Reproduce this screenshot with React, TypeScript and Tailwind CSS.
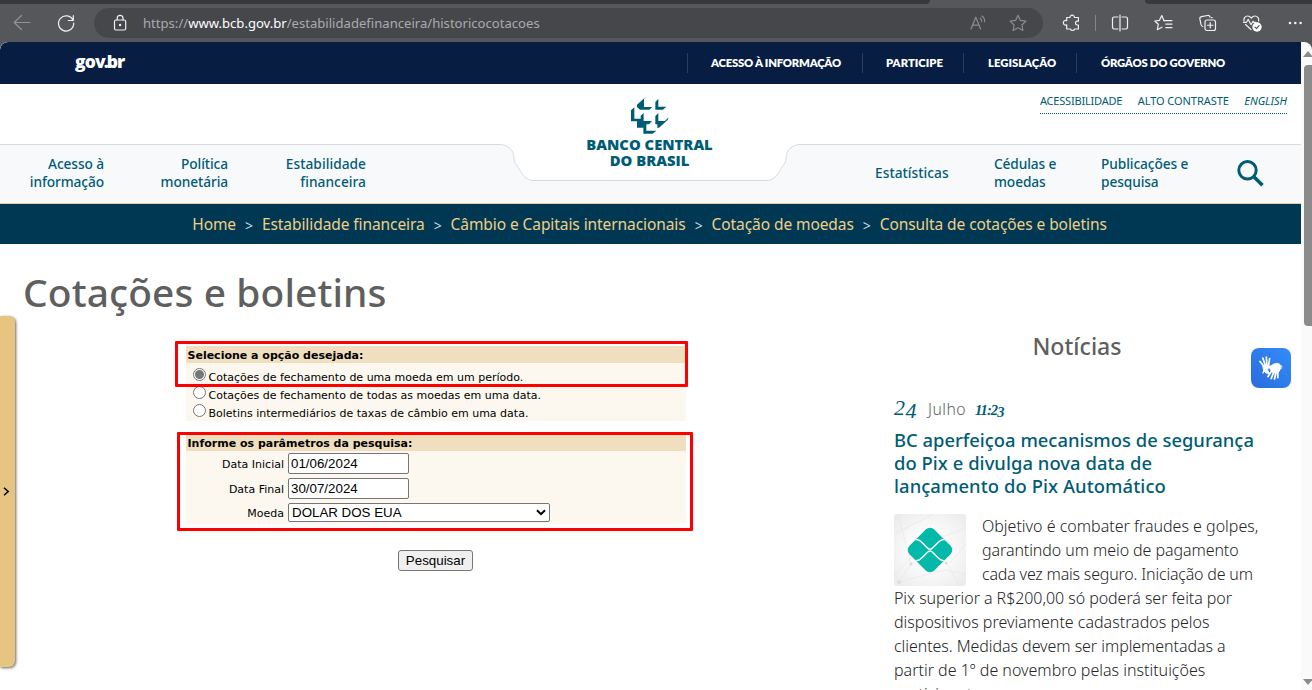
import type { ReactNode } from "react";

const noto = "font-['Noto_Sans','Open_Sans',sans-serif]";

function ToolIcon({ children, className }: { children: ReactNode; className?: string }) {
  return (
    <svg
      viewBox="0 0 20 20"
      width="20"
      height="20"
      fill="none"
      stroke="currentColor"
      strokeWidth="1.2"
      strokeLinecap="round"
      strokeLinejoin="round"
      className={`shrink-0 ${className ?? ""}`}
    >
      {children}
    </svg>
  );
}

function BrowserBar() {
  return (
    <div className="flex h-[42px] w-full shrink-0 flex-col bg-[#56575b]">
      <div className="flex h-1 justify-between">
        <div className="w-[930px] rounded-br-lg bg-[#38393d]" />
        <div className="w-[167px] rounded-bl-lg bg-[#38393d]" />
      </div>
      <div className="flex h-[38px] items-center">
        <ToolIcon className="ml-3 text-[#929396]">
          <path d="M18 9.5H2.5M9.5 2.5L2.2 9.5l7.3 7" />
        </ToolIcon>
        <ToolIcon className="ml-6 text-[#f0f0f0]">
          <path d="M17 7.2A7.6 7.6 0 1 0 17.7 10M17.3 2.5v5h-5" />
        </ToolIcon>
        <div className="ml-[18px] flex h-[30px] w-[949px] items-center rounded-full bg-[#46474b]">
          <ToolIcon className="ml-4 text-[#f0f0f0]">
            <rect x="4.5" y="7" width="11.2" height="10" rx="1.5" />
            <path d="M7.2 7V5.2a2.9 2.9 0 0 1 5.8 0V7" />
            <circle cx="10.1" cy="12" r="0.6" fill="currentColor" />
          </ToolIcon>
          <div className={`ml-[13px] pt-px text-[13.1px] whitespace-nowrap text-[#aaabad] ${noto}`}>
            https://<span className="text-white">www.bcb.gov.br</span>/estabilidadefinanceira/historicocotacoes
          </div>
          <ToolIcon className="ml-auto text-[#8b8c8f]">
            <path d="M3 16L7.8 4.2 12.6 16M4.6 12.2h6.4M12.2 5.2c1.2.9 1.6 2 1.5 3.4M14 3c2 1.4 2.8 3.2 2.6 5.6" />
          </ToolIcon>
          <ToolIcon className="mr-[15px] ml-[20px] text-[#8b8c8f]">
            <path d="M10 2.3l2.4 5.1 5.5.7-4 3.9 1 5.5-4.9-2.7-4.9 2.7 1-5.5-4-3.9 5.5-.7z" />
          </ToolIcon>
        </div>
        <div className="flex flex-1 items-center text-[#f0f0f0]">
          <ToolIcon className="ml-[18px]">
            <path
              transform="translate(1.2 0)"
              d="M4.5 4.5h3.2a2.3 2.3 0 1 1 4.6 0h3.900v3.700h-1a1.900 1.900 0 1 0 0 3.800h1v4h-3.700a2.300 2.300 0 0 1-4.300 0H4.500v-4.200a2.300 2.300 0 1 1 0-4.100z"
            />
          </ToolIcon>
          <div className="ml-[14px] h-4 w-px bg-[#85868a]" />
          <ToolIcon className="ml-[14px]">
            <path d="M8 4H4.200A1.700 1.700 0 0 0 2.500 5.700v8.600A1.700 1.700 0 0 0 4.200 16H8M12 4h3.800a1.700 1.700 0 0 1 1.700 1.700v8.600a1.700 1.700 0 0 1-1.700 1.700H12M10 2v16" />
          </ToolIcon>
          <ToolIcon className="ml-[24px]">
            <path d="M10 7.800L7.800 2.500 5.500 7.300.8 8l3.500 3.300-1 5.400 4.600-2.500" />
            <path d="M10 7.600h8M11.800 11.100h6.200M11.800 14.600h6.200" />
          </ToolIcon>
          <ToolIcon className="ml-[24px]">
            <rect x="7" y="7" width="10.500" height="10.500" rx="2" />
            <path d="M12.250 9.500v5.500M9.500 12.250h5.500M4.800 13.500c-1.200-.3-1.600-1-1.800-2L1.900 6.200C1.700 5 2.200 4 3.400 3.700l6.200-1.200c1.300-.2 2.100.4 2.500 1.700M13.500 4.700h.6" />
          </ToolIcon>
          <ToolIcon className="ml-[24px]">
            <path d="M9 16.500L3.500 11.500M2 8C1.300 5.500 3 3 5.700 3c1.600 0 2.600.8 3.600 2 1-1.200 2-2 3.600-2 2.700 0 4.400 2.500 3.700 5M1.500 9.300h3l1.700-3 2.800 5.400 2-3.500.8 1.100h2" />
            <circle cx="15" cy="14" r="4.700" fill="#fff" stroke="none" />
            <path d="M13 14.100l1.500 1.500 2.600-2.900" stroke="#56575b" />
          </ToolIcon>
          <ToolIcon className="ml-[24px]">
            <g fill="currentColor" stroke="none">
              <circle cx="4" cy="10" r="1.300" />
              <circle cx="9.300" cy="10" r="1.300" />
              <circle cx="14.600" cy="10" r="1.300" />
            </g>
          </ToolIcon>
        </div>
      </div>
    </div>
  );
}

function GovBar() {
  return (
    <div className="flex h-[42px] shrink-0 items-center rounded-tl-lg bg-[#071d41] text-white">
      <div className="w-[687px] pb-[3px] pl-[75px] font-['Open_Sans','Noto_Sans',sans-serif] text-[17.5px] leading-none font-extrabold">
        <span className="tracking-[-0.9px]">go</span>
        <span className="tracking-[-2px]">v.</span>
        <span className="tracking-[-0.9px]">br</span>
      </div>
      <div className="flex h-5 items-center font-['Lato',sans-serif] text-[11.3px] font-extrabold tracking-[-0.22px] whitespace-nowrap">
        <div className="flex h-5 w-[175px] items-center border-l border-[#2c3e5d] pt-px pl-[23px]">ACESSO À INFORMAÇÃO</div>
        <div className="flex h-5 w-[101px] items-center border-l border-[#2c3e5d] pt-px pl-[23px] tracking-normal">PARTICIPE</div>
        <div className="flex h-5 w-[113px] items-center border-l border-[#2c3e5d] pt-px pl-6 tracking-normal">LEGISLAÇÃO</div>
        <div className="flex h-5 items-center border-l border-[#2c3e5d] pt-px pl-6">ÓRGÃOS DO GOVERNO</div>
      </div>
    </div>
  );
}

function Logo() {
  return (
    <div className="absolute top-3 left-0 flex w-[1299px] flex-col items-center text-[#005c75]">
      <svg viewBox="423 37 114 114" width="38" height="38" fill="currentColor">
        <path d="M470 37L441 63v7l9 8h28l9-8h-25V46z" />
        <path d="M496 55l9-10v24h24l-10 9h-23z" />
        <path d="M423 80l10-9v34h19v-9l9-8v24h25l-9 10h-8v19h30l-11 9h-28v-18h-19v-19h-18z" />
        <path d="M496 97l9-9v24h20l11-11-3 8-26 23h-5v-10h-6z" />
      </svg>
      <div className="mt-0.5 text-center font-['Open_Sans','Noto_Sans',sans-serif] text-[14.8px] leading-4 font-extrabold">
        <div>BANCO CENTRAL</div>
        <div>DO BRASIL</div>
      </div>
    </div>
  );
}

function Header() {
  return (
    <header className="relative shrink-0 bg-white">
      <div className={`flex h-[60px] justify-end pr-[14px] text-[11px] text-[#005c75] ${noto}`}>
        <div className="mt-2 flex h-[22px] w-[247px] items-center justify-between border-b border-dotted border-[#005c75] pb-[2px] whitespace-nowrap">
          <span className="tracking-[-0.2px]">ACESSIBILIDADE</span>
          <span className="tracking-[-0.05px]">ALTO CONTRASTE</span>
          <span className="italic">ENGLISH</span>
        </div>
      </div>
      <nav
        className={`flex h-[60px] items-center border-t border-b border-t-[#d9dadb] border-b-[#e4cf9d] bg-[#f8f9fb] pb-[3px] text-[13.7px] leading-[18px] font-medium text-[#005c75] ${noto}`}
      >
        <a className="w-[104px] text-right tracking-[-0.08px]">Acesso à<br />informação</a>
        <a className="w-[124px] text-right tracking-[-0.08px]">Política<br />monetária</a>
        <a className="w-[138px] text-right tracking-[0.05px]">Estabilidade<br />financeira</a>
        <svg className="-mt-[20px] ml-[134px] h-[38px] w-[300px] shrink-0" viewBox="0 0 300 38" width="300" height="38">
          <path
            d="M0 0H300V1.500C292 1.500 286 6 286 14C286 19 283.500 21 281 24.500C277 33 272 36.500 267 36.500H33C28 36.500 23 33 19 24.500C16.500 21 14 19 14 14C14 6 8 1.500 0 1.500Z"
            fill="#fff"
          />
          <path
            d="M300 0.500C292 1 286 6 286 14C286 19 283.500 21 281 24.500C277 33 272 36.500 267 36.500H33C28 36.500 23 33 19 24.500C16.500 21 14 19 14 14C14 6 8 1 0 0.500"
            fill="none"
            stroke="#d9dadb"
          />
        </svg>
        <a className="ml-[75px] w-[119px] tracking-[0.05px]">Estatísticas</a>
        <a className="w-[107px] tracking-[-0.1px]">Cédulas e<br />moedas</a>
        <a className="w-[135px] tracking-[-0.08px]">Publicações e<br />pesquisa</a>
        <svg className="shrink-0" width="28" height="28" viewBox="0 0 28 28" fill="none" stroke="currentColor" strokeWidth="3">
          <circle cx="11.500" cy="11.300" r="8.700" />
          <path d="M17.600 17.400l8.900 8.900" strokeWidth="3.600" />
        </svg>
      </nav>
      <Logo />
    </header>
  );
}

const crumbs = [
  "Home",
  "Estabilidade financeira",
  "Câmbio e Capitais internacionais",
  "Cotação de moedas",
  "Consulta de cotações e boletins",
];

function Breadcrumb() {
  return (
    <div
      className={`flex h-10 shrink-0 items-center justify-center gap-[9px] bg-[#003853] pt-[2px] pr-[2px] text-[15.5px] tracking-[-0.08px] whitespace-nowrap text-[#f0cf85] ${noto}`}
    >
      {crumbs.map((c, i) => (
        <span key={c} className="flex items-center gap-[9px]">
          {i > 0 && <span className="text-[14px] text-[#c9dbe3]">&gt;</span>}
          <span>{c}</span>
        </span>
      ))}
    </div>
  );
}

function Radio({ checked }: { checked?: boolean }) {
  return (
    <span className="-mt-[5px] flex size-[13px] items-center justify-center rounded-full border border-[#767676] bg-white">
      {checked && <span className="size-[9px] rounded-full bg-[#767676]" />}
    </span>
  );
}

function Option({ label, checked }: { label: string; checked?: boolean }) {
  return (
    <label className="flex h-[18px] items-center gap-[2.5px] pl-[7px] whitespace-nowrap">
      <Radio checked={checked} />
      <span className="pt-[2px]">{label}</span>
    </label>
  );
}

function Field({ label, children }: { label: string; children: ReactNode }) {
  return (
    <div className="flex items-center">
      <span className="-mb-[3px] w-[98px] text-right">{label}</span>
      {children}
    </div>
  );
}

const box =
  "ml-1 flex items-center rounded-[2px] border border-[#767676] bg-white font-['Liberation_Sans',Arial,sans-serif] text-[13.333px]";

function QueryForm() {
  return (
    <div className="relative ml-[186px] w-[500px] shrink-0 pt-[6px] font-['DejaVu_Sans',Verdana,sans-serif] text-[11px] text-black">
      <div className="flex h-[17px] items-center bg-[#efdfbf] pt-[3px] pl-[1.5px] font-bold">Selecione a opção desejada:</div>
      <div className="h-[58px] bg-[#fcf8ef] pt-[5px]">
        <Option label="Cotações de fechamento de uma moeda em um período." checked />
        <Option label="Cotações de fechamento de todas as moedas em uma data." />
        <Option label="Boletins intermediários de taxas de câmbio em uma data." />
      </div>
      <div className="mt-[14px] flex h-4 items-center bg-[#efdfbf] pt-[2px] pl-[1.5px] font-bold">
        Informe os parâmetros da pesquisa:
      </div>
      <div className="flex h-[73px] flex-col gap-1 bg-[#fcf8ef] pt-[2px]">
        <Field label="Data Inicial">
          <div className={`h-[21px] w-[121px] px-[2px] ${box}`}>01/06/2024</div>
        </Field>
        <Field label="Data Final">
          <div className={`h-[21px] w-[121px] px-[2px] ${box}`}>30/07/2024</div>
        </Field>
        <Field label="Moeda">
          <div className={`h-[19px] w-[262px] justify-between px-[3px] ${box}`}>
            <span>DOLAR DOS EUA</span>
            <svg width="10" height="7" viewBox="0 0 10 7" fill="none" stroke="#000" strokeWidth="2">
              <path d="M1 1.200l4 4 4-4" />
            </svg>
          </div>
        </Field>
      </div>
      <div className="mt-[26px] ml-[212px] flex h-[21px] w-[75px] items-center justify-center rounded-[3px] border border-[#767676] bg-[#efefef] font-['Liberation_Sans',Arial,sans-serif] text-[13.333px]">
        Pesquisar
      </div>
      <div className="absolute top-[1px] -left-[11px] h-[46px] w-[513px] rounded-[1px] border-[3px] border-[#fd0000]" />
      <div className="absolute top-[92px] -left-[9px] h-[99px] w-[516px] rounded-[1px] border-[3px] border-[#fd0000]" />
    </div>
  );
}

function PixImage() {
  return (
    <svg width="72" height="72" viewBox="0 0 72 72" className="float-left mr-4 rounded-[3px]">
      <defs>
        <radialGradient id="paper" r="0.75">
          <stop offset="0.4" stopColor="#fafafa" />
          <stop offset="1" stopColor="#e8e8e8" />
        </radialGradient>
        <clipPath id="mark">
          <rect x="-17.5" y="-17.5" width="35" height="35" rx="6" transform="translate(36 36) rotate(45)" />
        </clipPath>
      </defs>
      <rect width="72" height="72" fill="url(#paper)" />
      <path
        d="M0 62L30 30 72 14M17 50L4 0M17 50L5 68 50 56 72 60M52 48l14 24M0 20l40-20M55 50L72 30"
        stroke="#e6e6e6"
        strokeWidth="0.6"
        fill="none"
      />
      <circle cx="17" cy="50" r="1.7" fill="#dedede" />
      <circle cx="5" cy="68" r="2" fill="#dedede" />
      <circle cx="52" cy="49" r="1.5" fill="#dedede" />
      <g clipPath="url(#mark)">
        <rect width="72" height="72" fill="#04b8aa" />
        <path
          d="M10 25.500H22.500C25 25.500 26 26.500 28 28.500L33.500 34C35 35.500 37 35.500 38.500 34L44 28.500C46 26.500 47 25.500 49.500 25.500H62M10 46.800H22.500C25 46.800 26 45.800 28 43.800L33.500 38.300C35 36.800 37 36.800 38.500 38.300L44 43.800C46 45.800 47 46.800 49.500 46.800H62"
          fill="none"
          stroke="#fafafa"
          strokeWidth="1.5"
        />
      </g>
    </svg>
  );
}

function News() {
  return (
    <aside className={`ml-[208px] w-[366px] shrink-0 whitespace-nowrap ${noto}`}>
      <h2 className="-mt-[10px] h-8 text-center text-[23.1px] leading-8 font-medium text-[#5f5f5f]">Notícias</h2>
      <div className="mt-[30px] flex h-8 items-baseline leading-8">
        <span className="w-[34px] font-['Liberation_Serif',serif] text-[22px] tracking-[0.5px] text-[#005c75] italic">
          2<span className="inline-block translate-y-[3px]">4</span>
        </span>
        <span className="w-[47px] text-[15.7px] font-light tracking-[0.5px] text-[#5f5f5f]">Julho</span>
        <span className="font-['Liberation_Serif',serif] text-[14.5px] font-bold tracking-[-0.9px] text-[#005c75] italic">
          11:2<span className="inline-block translate-y-[2px]">3</span>
        </span>
      </div>
      <h3 className="mt-[4px] text-[18.4px] leading-[23px] font-medium text-[#005c75]">
        BC aperfeiçoa mecanismos de segurança
        <br />
        <span className="tracking-[0.05px]">do Pix e divulga nova data de</span>
        <br />
        <span className="tracking-[0.08px]">lançamento do Pix Automático</span>
      </h3>
      <div className="mt-[17px] text-[16px] leading-6 font-light text-[#252525]">
        <PixImage />
        Objetivo é combater fraudes e golpes,
        <br />
        <span className="tracking-[-0.08px]">garantindo um meio de pagamento</span>
        <br />
        <span className="tracking-[-0.19px]">cada vez mais seguro. Iniciação de um</span>
        <br />
        <span className="tracking-[-0.06px]">Pix superior a R$200,00 só poderá ser feita por</span>
        <br />
        dispositivos previamente cadastrados pelos
        <br />
        <span className="tracking-[-0.06px]">clientes. Medidas devem ser implementadas a</span>
        <br />
        partir de 1º de novembro pelas instituições
        <br />
        participantes.
      </div>
    </aside>
  );
}

function SignLanguageButton() {
  return (
    <div className="absolute top-[306px] left-[1251px] size-10 rounded-lg bg-linear-to-tr from-[#2a6bdd] to-[#338df9]">
      <svg width="40" height="40" viewBox="0 0 40 40" stroke="#fff" fill="#fff" strokeLinecap="round" strokeLinejoin="round">
        <path d="M12 18c2-1.500 5-1.500 6.500 0l-2 4 2 3.500c-2.500.5-4.500-.8-5.500-2.500z" />
        <path d="M13.500 19L9 13.500M14.500 18L11.800 10M16 18L15.300 9M17.500 18L18.600 10.500" strokeWidth="1.7" fill="none" />
        <path d="M13 22l-1 3" strokeWidth="1.3" fill="none" />
        <path d="M18 19l5-3c2-1 5.500-1 6.500 1.500.5 3-1 6-3 7.500l-5.500-1-2-3.500z" />
        <path d="M21 22.500L17 28.500M23 23.500L20.200 30.500M25 24L23.500 31M26.700 23L26.800 29.500M22 18l-5.500 1.500" strokeWidth="1.8" fill="none" />
        <circle cx="29.5" cy="19" r="2.2" opacity="0.5" stroke="none" />
      </svg>
    </div>
  );
}

function Scrollbar() {
  return (
    <div className="flex w-[11px] shrink-0 flex-col items-end overflow-hidden rounded-tr-lg bg-[#fafafa]">
      <svg width="9" height="6" viewBox="0 0 9 6" className="mt-[9px] shrink-0">
        <path d="M5 0l5 6H0z" fill="#8b8b8b" />
      </svg>
      <div className="mt-2 h-[261px] w-2 shrink-0 rounded-l-[4px] bg-[#8b8b8b]" />
      <svg width="9" height="6" viewBox="0 0 9 6" className="mt-auto mb-[5px] shrink-0">
        <path d="M5 6l5-6H0z" fill="#8b8b8b" />
      </svg>
    </div>
  );
}

export default function App() {
  return (
    <div className="flex h-[690px] w-[1312px] flex-col overflow-hidden bg-[#56575b]">
      <BrowserBar />
      <div className="relative flex min-h-0 flex-1">
        <div className="flex w-[1301px] shrink-0 flex-col overflow-hidden rounded-tl-lg bg-white">
          <GovBar />
          <Header />
          <Breadcrumb />
          <main className="flex min-h-0 flex-1 flex-col">
            <h1
              className={`h-24 shrink-0 pl-[23px] text-[38.9px] leading-[95px] font-medium tracking-[0.1px] text-[#5f5f5f] ${noto}`}
            >
              Cotações e boletins
            </h1>
            <div className="flex min-h-0 flex-1 items-start">
              <QueryForm />
              <News />
            </div>
          </main>
        </div>
        <Scrollbar />
        <div className="absolute top-[274px] left-0 flex h-[351px] w-[15px] items-center rounded-r-md bg-[#e5c580] pl-[3px] shadow-[1px_1px_3px_rgba(0,0,0,0.6)]">
          <svg width="7" height="9" viewBox="0 0 7 9" fill="none" stroke="#000" strokeWidth="1.5">
            <path d="M1 0.800l4.200 3.700L1 8.200" />
          </svg>
        </div>
        <SignLanguageButton />
      </div>
    </div>
  );
}
